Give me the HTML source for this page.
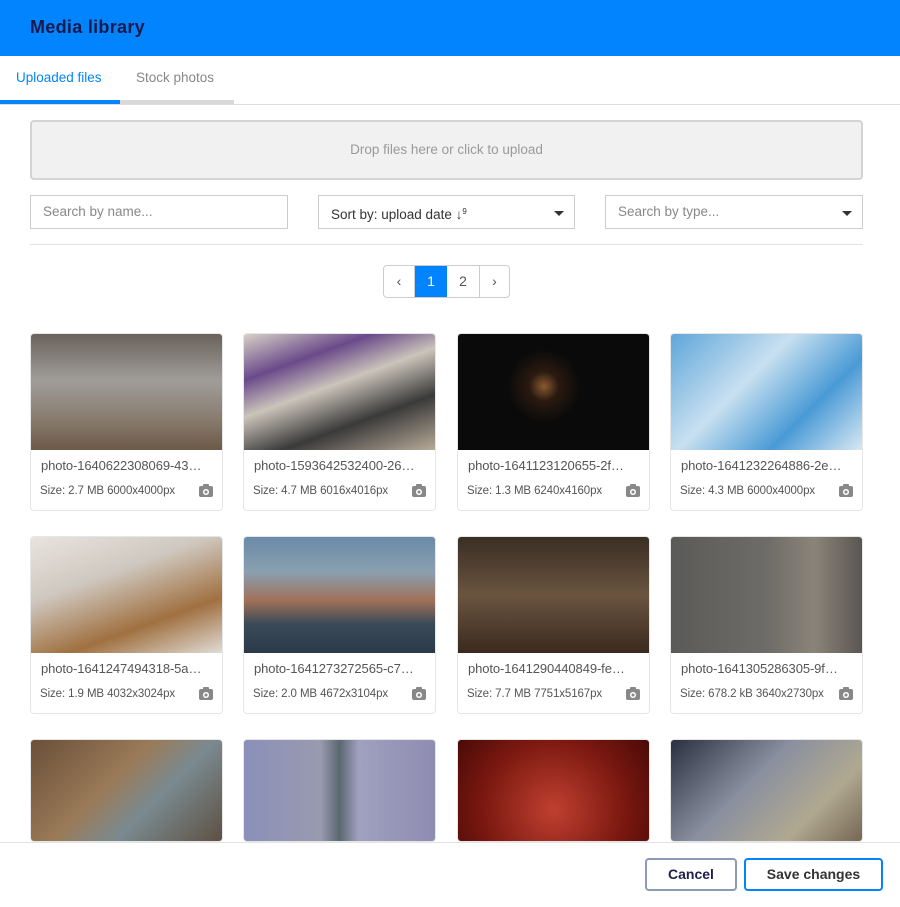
<!DOCTYPE html>
<html style="overflow:hidden;height:907px"><head><style>
*{box-sizing:border-box;margin:0;padding:0}
body{width:900px;height:907px;overflow:hidden;background:#fff;font-family:"Liberation Sans",sans-serif;position:relative}
.hdr{position:absolute;left:0;top:0;width:900px;height:56px;background:#0284fe}
.hdr h1{position:absolute;left:30px;top:17px;font-size:18px;font-weight:bold;color:#1a1a4a;letter-spacing:.3px}
.tabs{position:absolute;top:56px;left:0;width:900px;height:49px;border-bottom:1px solid #ddd}
.tab{position:absolute;top:14px;font-size:13.5px}
.ul1{position:absolute;left:0;top:100px;width:120px;height:4px;background:#0284fe}
.ul2{position:absolute;left:120px;top:100px;width:114px;height:4px;background:#d8d8d8}
.drop{position:absolute;left:30px;top:120px;width:833px;height:60px;background:#f1f1f1;border:2px solid #d4d4d4;border-radius:4px;text-align:center;line-height:56px;font-size:13.5px;color:#9a9a9a}
.inp{position:absolute;top:195px;height:34px;border:1px solid #ccc;font-size:13.5px;line-height:32px;padding-left:12px;color:#888}
.car{position:absolute;right:10px;top:15px;border-left:5px solid transparent;border-right:5px solid transparent;border-top:5px solid #333}
.hr{position:absolute;left:30px;top:244px;width:833px;height:1px;background:#e3e3e3}
.pg{position:absolute;left:383px;top:265px;height:33px;width:127px;border:1px solid #ccc;border-radius:4px;display:flex;font-size:14px;color:#555;overflow:hidden}
.pg div{text-align:center;line-height:31px}
.card{position:absolute;width:193px;height:178px;border:1px solid #e6e6e6;border-radius:4px;overflow:hidden}
.card .im{height:116px}
.card .n{position:absolute;left:10px;top:124px;font-size:13px;color:#555;white-space:nowrap;letter-spacing:-.1px}
.card .s{position:absolute;left:9px;top:151px;font-size:11.5px;color:#555;white-space:nowrap;letter-spacing:-.1px}
.cam{position:absolute;right:9px;top:152px;width:14px;height:11px;background:#888;border-radius:2px}
.cam:before{content:"";position:absolute;left:4px;top:-2px;width:6px;height:3px;background:#888;border-radius:1px}
.cam:after{content:"";position:absolute;left:4px;top:3px;width:6px;height:6px;border-radius:50%;background:#fff;box-shadow:inset 0 0 0 1.5px #fff,inset 0 0 0 3px #888}
.ft{position:absolute;left:0;top:842px;width:900px;height:65px;background:#fff;border-top:1px solid #e3e3e3}
.btn{position:absolute;top:858px;height:33px;border-radius:4px;font-weight:bold;font-size:14px;text-align:center;line-height:29px}
</style></head><body>
<div class="hdr"><h1>Media library</h1></div>
<div class="tabs">
<div class="tab" style="left:16px;color:#0284fe">Uploaded files</div>
<div class="tab" style="left:136px;color:#888">Stock photos</div>
</div>
<div class="ul1"></div><div class="ul2"></div>
<div class="drop">Drop files here or click to upload</div>
<div class="inp" style="left:30px;width:258px">Search by name...</div>
<div class="inp" style="left:318px;width:257px;color:#333">Sort by: upload date ↓<span style="font-size:8px;vertical-align:5px">9</span><div class="car"></div></div>
<div class="inp" style="left:605px;width:258px">Search by type...<div class="car"></div></div>
<div class="hr"></div>
<div class="pg"><div style="width:31px;border-right:1px solid #ccc">‹</div><div style="width:32px;background:#0284fe;color:#fff">1</div><div style="width:33px;border-right:1px solid #ccc">2</div><div style="width:29px">›</div></div>

<div class="card" style="left:30px;top:333px"><div class="im" style="background:linear-gradient(180deg,#6a625c 0%,#a09d99 40%,#8b7f73 70%,#6d5a48 100%)"></div><div class="n">photo-1640622308069-43…</div><div class="s">Size: 2.7 MB 6000x4000px</div><div class="cam"></div></div>
<div class="card" style="left:243px;top:333px"><div class="im" style="background:linear-gradient(160deg,#d8d2c8 0%,#6a4a8a 25%,#cbc4ba 45%,#3a3a3a 70%,#b8aa98 100%)"></div><div class="n">photo-1593642532400-26…</div><div class="s">Size: 4.7 MB 6016x4016px</div><div class="cam"></div></div>
<div class="card" style="left:457px;top:333px"><div class="im" style="background:radial-gradient(circle at 45% 45%,#8a5a30 0,#2a1a10 12%,#0a0a0a 30%)"></div><div class="n">photo-1641123120655-2f…</div><div class="s">Size: 1.3 MB 6240x4160px</div><div class="cam"></div></div>
<div class="card" style="left:670px;top:333px"><div class="im" style="background:linear-gradient(135deg,#5fa6da,#c8e0f0 40%,#4a9ad6 70%,#d8e8f2)"></div><div class="n">photo-1641232264886-2e…</div><div class="s">Size: 4.3 MB 6000x4000px</div><div class="cam"></div></div>

<div class="card" style="left:30px;top:536px"><div class="im" style="background:linear-gradient(160deg,#e8e4de 0%,#cfc8c0 35%,#a07040 70%,#e0dcd6 100%)"></div><div class="n">photo-1641247494318-5a…</div><div class="s">Size: 1.9 MB 4032x3024px</div><div class="cam"></div></div>
<div class="card" style="left:243px;top:536px"><div class="im" style="background:linear-gradient(180deg,#6a8aa8 0%,#8aa0b0 30%,#a07058 55%,#3a4a58 75%,#2a3a48 100%)"></div><div class="n">photo-1641273272565-c7…</div><div class="s">Size: 2.0 MB 4672x3104px</div><div class="cam"></div></div>
<div class="card" style="left:457px;top:536px"><div class="im" style="background:linear-gradient(180deg,#3a2e24,#6a5440 50%,#3a2a1e)"></div><div class="n">photo-1641290440849-fe…</div><div class="s">Size: 7.7 MB 7751x5167px</div><div class="cam"></div></div>
<div class="card" style="left:670px;top:536px"><div class="im" style="background:linear-gradient(90deg,#5a5a58,#6e6c68 50%,#8a8478 75%,#5a5652)"></div><div class="n">photo-1641305286305-9f…</div><div class="s">Size: 678.2 kB 3640x2730px</div><div class="cam"></div></div>

<div class="card" style="left:30px;top:739px;height:103px"><div class="im" style="background:linear-gradient(135deg,#6a5038,#9a7a58 40%,#7a8a90 60%,#5a4838)"></div></div>
<div class="card" style="left:243px;top:739px;height:103px"><div class="im" style="background:linear-gradient(90deg,#8a90b8,#9a9ab0 40%,#5a6870 50%,#a0a0c0 60%,#8e8cb0)"></div></div>
<div class="card" style="left:457px;top:739px;height:103px"><div class="im" style="background:radial-gradient(circle at 50% 60%,#c04030,#7a1810 60%,#4a0a08)"></div></div>
<div class="card" style="left:670px;top:739px;height:103px"><div class="im" style="background:linear-gradient(135deg,#2a3040,#8a90a0 40%,#b0a890 70%,#6a5a48)"></div></div>

<div class="ft"></div>
<div class="btn" style="left:645px;width:92px;border:2px solid #8a9ab8;color:#1e1e4a">Cancel</div>
<div class="btn" style="left:744px;width:139px;border:2px solid #0284fe;color:#333">Save changes</div>
</body></html>
